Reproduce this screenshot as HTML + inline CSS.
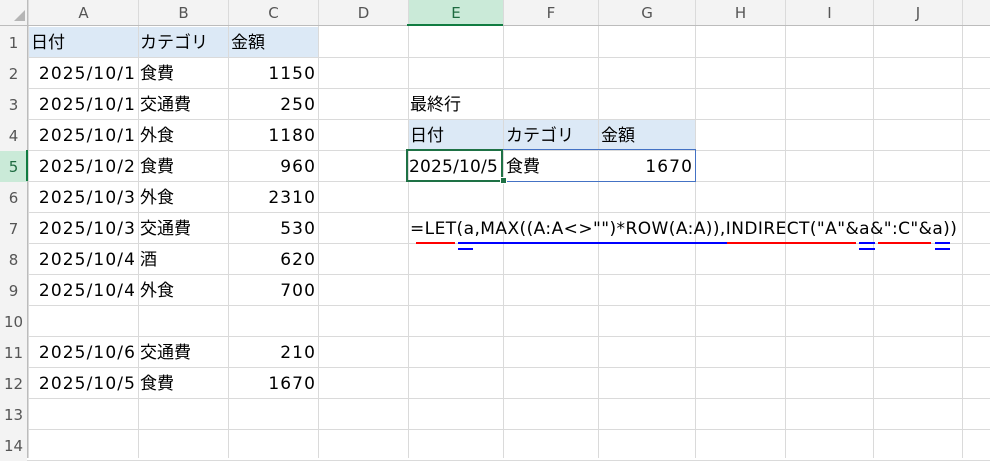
<!DOCTYPE html>
<html><head><meta charset="utf-8"><style>
body{margin:0;width:990px;height:458px;overflow:hidden;background:#fff;font-family:"DejaVu Sans","Noto Sans CJK JP",sans-serif;position:relative}
.a{position:absolute;white-space:nowrap}
.vl{position:absolute;top:0;width:1px;height:458px;background:#dadada}
.hl{position:absolute;left:0;height:1px;width:990px;background:#dadada}
.ch{position:absolute;top:0;height:25px;line-height:26px;text-align:center;font-size:15px;color:#555;background:#f3f3f3}
.rh{position:absolute;left:0;width:27px;text-align:center;font-size:15px;color:#555;background:#f3f3f3;height:31px;line-height:33px}
.t{position:absolute;font-size:17px;color:#000;height:31px;line-height:34px;white-space:nowrap}
.d{letter-spacing:1.1px}
.r{text-align:right}
.u{position:absolute;height:2px}
</style></head><body>
<div class="a" style="left:0;top:0;width:990px;height:26px;background:#f3f3f3"></div>
<div class="a" style="left:0;top:0;width:28px;height:458px;background:#f3f3f3"></div>
<div class="a" style="left:28px;top:27px;width:290px;height:30px;background:#dce9f6"></div>
<div class="a" style="left:408px;top:120px;width:287px;height:30px;background:#dce9f6"></div>
<div class="a" style="left:408px;top:0;width:95px;height:25px;background:#caead8"></div>
<div class="a" style="left:0;top:151px;width:27px;height:30px;background:#caead8"></div>
<script>
var xs=[28,138,228,318,408,503,598,695,785,873,962];
var L="ABCDEFGHIJ";
var h="";
for(var i=0;i<xs.length;i++){h+='<div class="vl" style="left:'+xs[i]+'px"></div>';}
for(var i=0;i<10;i++){h+='<div class="ch" style="left:'+(xs[i]+1)+'px;width:'+(xs[i+1]-xs[i]-1)+'px;'+(i==4?'background:#caead8;color:#1e6b41':'')+'">'+L[i]+'</div>';}
h+='<div class="ch" style="left:963px;width:27px"></div>';
for(var r=0;r<14;r++){var y=26+31*r;h+='<div class="hl" style="top:'+(y+31)+'px"></div>';
h+='<div class="rh" style="top:'+(y+1)+'px;'+(r==4?'background:#caead8;color:#1e6b41':'')+'">'+(r+1)+'</div>';}
document.write(h);
</script>
<div class="a" style="left:0;top:25px;width:990px;height:1px;background:#bcbcbc"></div>
<div class="a" style="left:27px;top:0;width:1px;height:458px;background:#bcbcbc"></div>
<div class="a" style="left:407px;top:24px;width:96px;height:2px;background:#107c41"></div>
<div class="a" style="left:26px;top:150px;width:2px;height:31px;background:#107c41"></div>

<div class="t" style="left:31px;top:26px">日付</div><div class="t" style="left:140px;top:26px">カテゴリ</div><div class="t" style="left:231px;top:26px">金額</div>
<div class="t r d" style="left:28px;width:108px;top:57px">2025/10/1</div><div class="t" style="left:140px;top:57px">食費</div><div class="t r d" style="left:228px;width:88px;top:57px">1150</div>
<div class="t r d" style="left:28px;width:108px;top:88px">2025/10/1</div><div class="t" style="left:140px;top:88px">交通費</div><div class="t r d" style="left:228px;width:88px;top:88px">250</div>
<div class="t r d" style="left:28px;width:108px;top:119px">2025/10/1</div><div class="t" style="left:140px;top:119px">外食</div><div class="t r d" style="left:228px;width:88px;top:119px">1180</div>
<div class="t r d" style="left:28px;width:108px;top:150px">2025/10/2</div><div class="t" style="left:140px;top:150px">食費</div><div class="t r d" style="left:228px;width:88px;top:150px">960</div>
<div class="t r d" style="left:28px;width:108px;top:181px">2025/10/3</div><div class="t" style="left:140px;top:181px">外食</div><div class="t r d" style="left:228px;width:88px;top:181px">2310</div>
<div class="t r d" style="left:28px;width:108px;top:212px">2025/10/3</div><div class="t" style="left:140px;top:212px">交通費</div><div class="t r d" style="left:228px;width:88px;top:212px">530</div>
<div class="t r d" style="left:28px;width:108px;top:243px">2025/10/4</div><div class="t" style="left:140px;top:243px">酒</div><div class="t r d" style="left:228px;width:88px;top:243px">620</div>
<div class="t r d" style="left:28px;width:108px;top:274px">2025/10/4</div><div class="t" style="left:140px;top:274px">外食</div><div class="t r d" style="left:228px;width:88px;top:274px">700</div>
<div class="t r d" style="left:28px;width:108px;top:336px">2025/10/6</div><div class="t" style="left:140px;top:336px">交通費</div><div class="t r d" style="left:228px;width:88px;top:336px">210</div>
<div class="t r d" style="left:28px;width:108px;top:367px">2025/10/5</div><div class="t" style="left:140px;top:367px">食費</div><div class="t r d" style="left:228px;width:88px;top:367px">1670</div>

<div class="t" style="left:410px;top:88px">最終行</div>
<div class="t" style="left:410px;top:119px">日付</div><div class="t" style="left:506px;top:119px">カテゴリ</div><div class="t" style="left:601px;top:119px">金額</div>
<div class="a" style="left:407px;top:149px;width:287px;height:31px;border:1px solid #4472c4"></div>
<div class="a" style="left:406px;top:149px;width:93px;height:29px;border:2px solid #1e7145"></div>
<div class="a" style="left:500px;top:177px;width:5px;height:5px;background:#1e7145;border:1px solid #fff"></div>
<div class="t" style="left:409px;top:150px;letter-spacing:0.2px">2025/10/5</div><div class="t" style="left:506px;top:150px">食費</div><div class="t r d" style="left:598px;width:95px;top:150px">1670</div>
<div class="t" style="left:410px;top:212px;letter-spacing:0.43px">=LET(a,MAX((A:A&lt;&gt;"")*ROW(A:A)),INDIRECT("A"&amp;a&amp;":C"&amp;a))</div>
<div class="u" style="left:416px;top:242px;width:39px;background:#f00"></div>
<div class="u" style="left:458px;top:242px;width:269px;background:#00f"></div>
<div class="u" style="left:458px;top:248px;width:15px;background:#00f"></div>
<div class="u" style="left:727px;top:242px;width:129px;background:#f00"></div>
<div class="u" style="left:859px;top:242px;width:16px;background:#00f"></div>
<div class="u" style="left:859px;top:248px;width:16px;background:#00f"></div>
<div class="u" style="left:878px;top:242px;width:53px;background:#f00"></div>
<div class="u" style="left:935px;top:242px;width:15px;background:#00f"></div>
<div class="u" style="left:935px;top:248px;width:15px;background:#00f"></div>
<div class="a" style="left:14px;top:10px;width:0;height:0;border-left:11px solid transparent;border-bottom:11px solid #b5b5b5"></div>
</body></html>
